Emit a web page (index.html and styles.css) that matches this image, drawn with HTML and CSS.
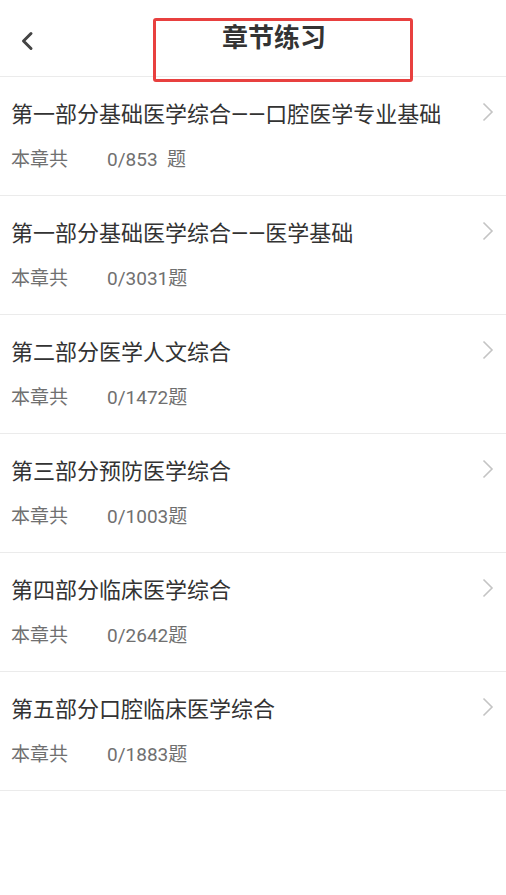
FILE: index.html
```html
<!DOCTYPE html>
<html lang="zh">
<head>
<meta charset="utf-8">
<link rel="stylesheet" href="styles.css">
</head>
<body>
<div class="page">
  <header class="header">
    <button class="back" aria-label="返回">
      <svg width="14" height="20" viewBox="0 0 14 20"><path d="M11 2.5 L3.5 10 L11 17.5" fill="none" stroke="#444" stroke-width="3" stroke-linecap="round" stroke-linejoin="round"/></svg>
    </button>
    <h1 class="title">章节练习</h1>
    <div class="highlight"></div>
  </header>
  <ul class="list">
    <li class="row">
      <div class="row-main">
        <div class="row-title">第一部分基础医学综合——口腔医学专业基础</div>
        <div class="row-sub"><span>本章共</span><span class="count">0/853&nbsp;&nbsp;题</span></div>
      </div>
      <svg class="chev" width="12" height="20" viewBox="0 0 12 20"><path d="M1.5 1.5 L10 10 L1.5 18.5" fill="none" stroke="#c4c4c4" stroke-width="1.6"/></svg>
    </li>
    <li class="row">
      <div class="row-main">
        <div class="row-title">第一部分基础医学综合——医学基础</div>
        <div class="row-sub"><span>本章共</span><span class="count">0/3031题</span></div>
      </div>
      <svg class="chev" width="12" height="20" viewBox="0 0 12 20"><path d="M1.5 1.5 L10 10 L1.5 18.5" fill="none" stroke="#c4c4c4" stroke-width="1.6"/></svg>
    </li>
    <li class="row">
      <div class="row-main">
        <div class="row-title">第二部分医学人文综合</div>
        <div class="row-sub"><span>本章共</span><span class="count">0/1472题</span></div>
      </div>
      <svg class="chev" width="12" height="20" viewBox="0 0 12 20"><path d="M1.5 1.5 L10 10 L1.5 18.5" fill="none" stroke="#c4c4c4" stroke-width="1.6"/></svg>
    </li>
    <li class="row">
      <div class="row-main">
        <div class="row-title">第三部分预防医学综合</div>
        <div class="row-sub"><span>本章共</span><span class="count">0/1003题</span></div>
      </div>
      <svg class="chev" width="12" height="20" viewBox="0 0 12 20"><path d="M1.5 1.5 L10 10 L1.5 18.5" fill="none" stroke="#c4c4c4" stroke-width="1.6"/></svg>
    </li>
    <li class="row">
      <div class="row-main">
        <div class="row-title">第四部分临床医学综合</div>
        <div class="row-sub"><span>本章共</span><span class="count">0/2642题</span></div>
      </div>
      <svg class="chev" width="12" height="20" viewBox="0 0 12 20"><path d="M1.5 1.5 L10 10 L1.5 18.5" fill="none" stroke="#c4c4c4" stroke-width="1.6"/></svg>
    </li>
    <li class="row">
      <div class="row-main">
        <div class="row-title">第五部分口腔临床医学综合</div>
        <div class="row-sub"><span>本章共</span><span class="count">0/1883题</span></div>
      </div>
      <svg class="chev" width="12" height="20" viewBox="0 0 12 20"><path d="M1.5 1.5 L10 10 L1.5 18.5" fill="none" stroke="#c4c4c4" stroke-width="1.6"/></svg>
    </li>
  </ul>
</div>
</body>
</html>
```

FILE: styles.css
```css
* { box-sizing: border-box; }
html, body {
  margin: 0;
  padding: 0;
  background: #fff;
}
body {
  font-family: Roboto, "Noto Sans CJK SC", sans-serif;
  color: #333;
}
.page {
  width: 506px;
}
.header {
  position: relative;
  height: 77px;
  border-bottom: 1px solid #ebebeb;
  display: flex;
  align-items: center;
  justify-content: center;
}
.back {
  position: absolute;
  left: 20px;
  top: 31px;
  width: 14px;
  height: 20px;
  padding: 0;
  border: 0;
  background: none;
  display: flex;
}
.title {
  margin: 0 0 0 42px;
  font-size: 26px;
  font-weight: bold;
  color: #333;
  line-height: 34px;
  letter-spacing: 0;
}
.highlight {
  position: absolute;
  left: 153px;
  top: 18px;
  width: 260px;
  height: 64px;
  border: 3px solid #e8403f;
  border-radius: 3px;
}
.list {
  list-style: none;
  margin: 0;
  padding: 0;
}
.row {
  height: 119px;
  border-bottom: 1px solid #ebebeb;
  display: flex;
  align-items: flex-start;
  padding: 0 12px 0 11px;
}
.row-main {
  flex: 1;
  padding-top: 23px;
}
.row-title {
  font-size: 22px;
  line-height: 30px;
  color: #333;
  white-space: nowrap;
}
.row-sub {
  margin-top: 17px;
  font-size: 19px;
  line-height: 26px;
  color: #707070;
  display: flex;
}
.count {
  margin-left: 39px;
}
.chev {
  margin-top: 25px;
  flex: none;
}
```
